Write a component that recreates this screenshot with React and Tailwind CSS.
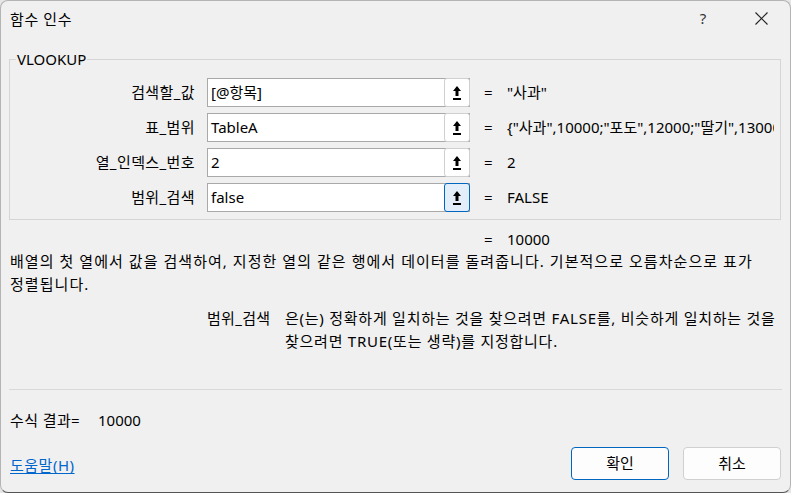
import React from "react";

// argument rows of the VLOOKUP dialog
const args = [
  { label: "검색할_값", value: "[@항목]", result: '"사과"' },
  {
    label: "표_범위",
    value: "TableA",
    result: '{"사과",10000;"포도",12000;"딸기",13000',
  },
  { label: "열_인덱스_번호", value: "2", result: "2" },
  { label: "범위_검색", value: "false", result: "FALSE", focused: true },
];

const CollapseIcon = () => (
  <svg width="8" height="16" viewBox="0 0 8 16" fill="#000">
    <polygon points="4,1 8,6 5.5,6 5.5,11 2.5,11 2.5,6 0,6" />
    <rect x="0" y="13" width="8" height="2" />
  </svg>
);

const ArgRow = ({ label, value, result, focused }) => (
  <div className="flex items-center h-[29px] w-full min-w-0">
    <div className="w-[185px] shrink-0 text-right whitespace-nowrap tracking-[0.4px]">{label}</div>
    <div className="ml-[12px] w-[263px] shrink-0 h-[29px] flex items-center bg-white border border-[#a9a9a9]">
      <div className="flex-1 pl-[3px] whitespace-nowrap overflow-hidden">{value}</div>
      <button
        className={
          focused
            ? "-my-px -mr-px w-[26px] h-[29px] flex items-center justify-center rounded-[3px] border border-[#0067c0] bg-[#e3eefa]"
            : "-my-px -mr-px w-[26px] h-[29px] flex items-center justify-center rounded-[3px] border border-[#d0d0d0] bg-white"
        }
      >
        <CollapseIcon />
      </button>
    </div>
    <span className="ml-[14px] w-[23px] shrink-0">=</span>
    <div className="flex-1 min-w-0 mr-[6px] whitespace-nowrap overflow-hidden">{result}</div>
  </div>
);

export default function App() {
  return (
    <div className="w-[791px] h-[493px] bg-[#e6e6e6] font-['Noto_Sans','Noto_Sans_CJK_KR',sans-serif] text-[15px] text-black">
      <div className="w-[791px] h-[493px] flex flex-col bg-[#f0f0f0] rounded-[8px] border border-[#b4b4b4] border-b-[#555555] overflow-hidden">
        {/* title bar */}
        <div className="h-[35px] shrink-0 flex items-center justify-between">
          <div className="pl-[9px] leading-[20px] tracking-[0.6px]">함수 인수</div>
          <div className="flex items-center gap-[12px] pr-[6px]">
            <div className="w-[46px] text-center text-[#333]">?</div>
            <div className="w-[46px] flex justify-center">
              <svg width="13" height="13" viewBox="0 0 13 13" stroke="#222" strokeWidth="1.1">
                <line x1="0.5" y1="0.5" x2="12.5" y2="12.5" />
                <line x1="12.5" y1="0.5" x2="0.5" y2="12.5" />
              </svg>
            </div>
          </div>
        </div>

        <div className="flex-1 flex flex-col pl-[8px] pr-[9px] min-w-0">
          <fieldset className="mt-[13px] border border-[#d5d5d5] pb-[7px] min-w-0">
            <legend className="ml-[6px] px-[1px] leading-[20px]">VLOOKUP</legend>
            <div className="mt-[9px] flex flex-col gap-[6px] min-w-0">
              {args.map((a) => (
                <ArgRow key={a.label} {...a} />
              ))}
            </div>
          </fieldset>

          <div className="mt-[8px] pl-[475px] leading-[22px] flex">
            <span className="w-[23px]">=</span>
            <span>10000</span>
          </div>

          <p className="pl-[1px] leading-[23px] whitespace-nowrap tracking-[1.05px]">
            배열의 첫 열에서 값을 검색하여, 지정한 열의 같은 행에서 데이터를 돌려줍니다. 기본적으로 오름차순으로 표가
            <br />
            정렬됩니다.
          </p>

          <div className="mt-[11px] flex leading-[23px]">
            <div className="ml-[198px] w-[78px] shrink-0 whitespace-nowrap tracking-[0.3px]">범위_검색</div>
            <p className="whitespace-nowrap tracking-[0.75px]">
              은(는) 정확하게 일치하는 것을 찾으려면 FALSE를, 비슷하게 일치하는 것을
              <br />
              찾으려면 TRUE(또는 생략)를 지정합니다.
            </p>
          </div>

          <div className="mt-[36px] h-px bg-[#d9d9d9] mr-[-1px]" />

          <div className="mt-[19px] pl-[1px] flex leading-[22px]">
            <span className="w-[88px] whitespace-nowrap tracking-[0.4px]">수식 결과=</span>
            <span>10000</span>
          </div>

          <div className="mt-[16px] flex items-center justify-between">
            <a href="#" className="pl-[1px] text-[#0066cc] underline underline-offset-2 leading-[22px] mt-[3px] tracking-[0.5px]">
              도움말(H)
            </a>
            <div className="flex gap-[14px]">
              <button className="w-[98px] h-[33px] rounded-[4px] border border-[#0067c0] bg-[#fdfdfd]">확인</button>
              <button className="w-[98px] h-[33px] rounded-[4px] border border-[#d0d0d0] bg-[#fdfdfd]">취소</button>
            </div>
          </div>
        </div>
      </div>
    </div>
  );
}
